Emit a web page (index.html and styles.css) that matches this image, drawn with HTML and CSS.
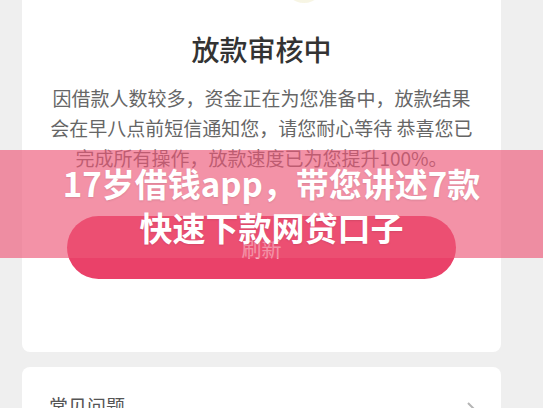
FILE: index.html
```html
<!DOCTYPE html>
<html lang="zh-CN">
<head>
  <meta charset="UTF-8">
  <meta name="viewport" content="width=device-width, initial-scale=1.0">
  <title>放款审核中</title>
  <link rel="stylesheet" href="styles.css">
</head>
<body>

<div class="page">
  <div class="card status-card">
    <div class="status-icon"></div>
    <h2 class="status-title">放款审核中</h2>
    <p class="status-text">因借款人数较多，资金正在为您准备中，放款结果<br>会在早八点前短信通知您，请您耐心等待 恭喜您已<br>完成所有操作，放款速度已为您提升100%。</p>
    <button class="refresh-btn">刷新</button>
  </div>

  <div class="card faq-card">
    <span class="faq-title">常见问题</span>
    <svg class="faq-arrow" width="12" height="18" viewBox="0 0 12 18">
      <path d="M2 2 L9 9 L2 16" fill="none" stroke="#b5b5b5" stroke-width="2"/>
    </svg>
  </div>
</div>

<div class="banner">
  <div class="banner-text">17岁借钱app，带您讲述7款<br>快速下款网贷口子</div>
</div>

</body>
</html>
```

FILE: styles.css
```css
body {
  margin: 0;
  padding: 0;
  background-color: #efefef;
  font-family: "Noto Sans CJK SC", "Noto Sans", sans-serif;
  height: 408px;
  overflow: hidden;
}
.page {
  width: 479px;
  padding-left: 22px;
}
.card {
  background-color: white;
  border-radius: 8px;
}
.status-card {
  margin-top: -20px;
  padding: 0 22px 73px;
  text-align: center;
}
.status-icon {
  width: 40px;
  height: 23px;
  margin: 0 0 27px 240px;
  border-radius: 0 0 20px 20px;
  background: linear-gradient(to bottom, transparent 18px, #f7f5e4 18px);
}
.status-title {
  margin: 0;
  font-size: 28px;
  font-weight: 500;
  line-height: 39px;
  color: #333;
}
.status-text {
  margin: 14px 0 0;
  font-size: 19px;
  line-height: 30px;
  color: #666;
  white-space: nowrap;
}
.refresh-btn {
  display: block;
  width: 389px;
  height: 63px;
  margin: 43px auto 0;
  border: none;
  border-radius: 32px;
  background-color: #ea4169;
  color: white;
  font-family: inherit;
  font-size: 20px;
  padding-top: 2px;
}
.faq-card {
  margin-top: 15px;
  padding: 24px 23px 20px 27px;
  display: flex;
  justify-content: space-between;
  align-items: center;
}
.faq-title {
  font-size: 19px;
  line-height: 30px;
  color: #555;
}
.faq-arrow {
  margin-top: 8px;
}
.banner {
  position: absolute;
  top: 150px;
  left: 0;
  right: 0;
  height: 108px;
  display: flex;
  align-items: center;
  justify-content: center;
  background-color: rgba(236, 88, 120, 0.65);
}
.banner-text {
  color: white;
  font-size: 33px;
  font-weight: 700;
  line-height: 44px;
  text-align: center;
  padding-top: 2px;
  text-shadow: 0 1px 2px rgba(0, 0, 0, 0.1);
}
```
